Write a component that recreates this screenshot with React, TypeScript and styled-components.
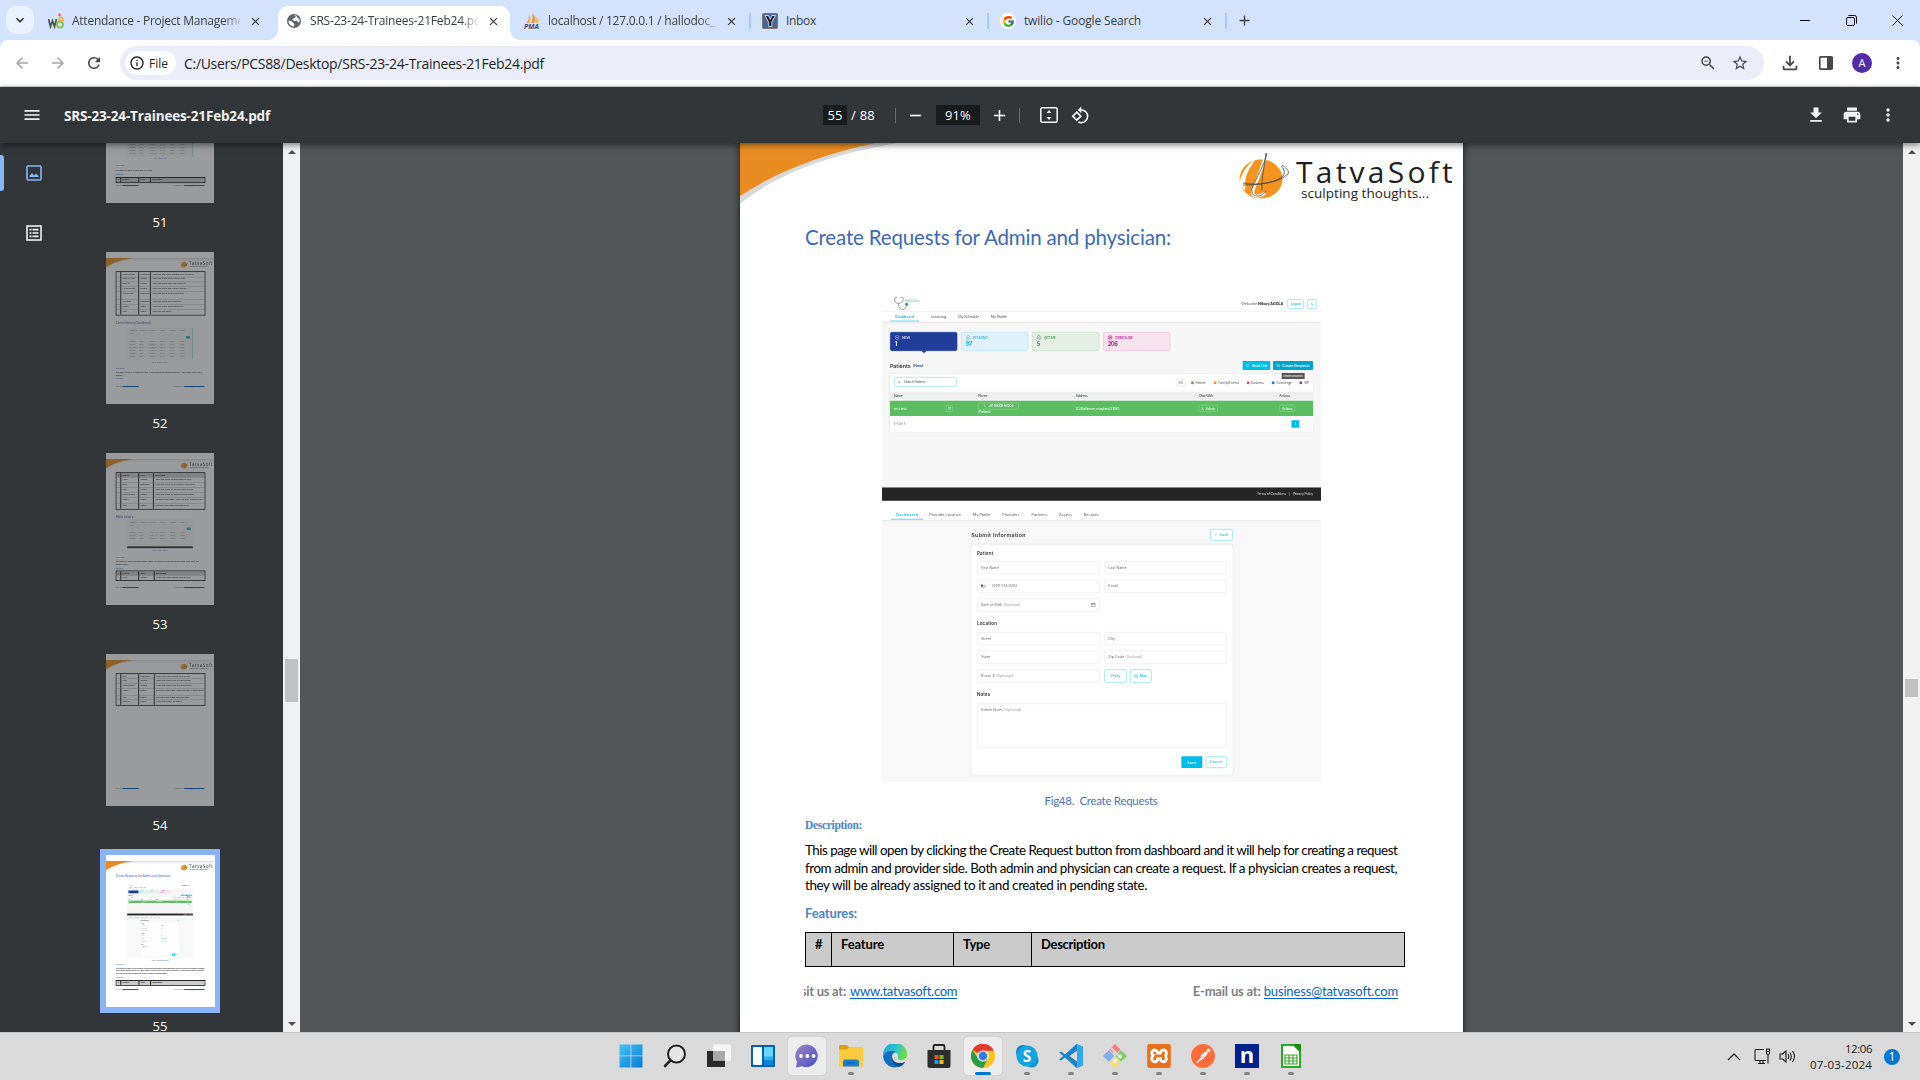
import React, { useLayoutEffect, useRef, useState } from "react";
import styled, { createGlobalStyle, css } from "styled-components";
import {
  MdAdd,
  MdArrowBack,
  MdArrowForward,
  MdClose,
  MdFileDownload,
  MdInfoOutline,
  MdKeyboardArrowDown,
  MdMenu,
  MdMoreVert,
  MdOutlineFileDownload,
  MdPrint,
  MdRefresh,
  MdRemove,
  MdRotate90DegreesCcw,
  MdStarOutline,
  MdZoomOut,
} from "react-icons/md";
import { FcGoogle } from "react-icons/fc";
import { SiPostman, SiXampp } from "react-icons/si";

const UI = `"Open Sans", "Noto Sans", sans-serif`;
const DOC = `Lato, "Open Sans", sans-serif`;
const APP = `Inter, "Open Sans", sans-serif`;

const Global = createGlobalStyle`
  * { box-sizing: border-box; }
  body { margin: 0; overflow: hidden; background: #525659; font-family: ${UI}; }
  svg { display: block; flex: none; }
`;

/* ---------- text that tracks itself to a set width ---------- */

const FitSpan = styled.span`
  display: inline-block;
  white-space: pre;
  flex: none;
  justify-self: start;
`;

function Fit({ w, children, className }: { w: number; children: string; className?: string }) {
  const ref = useRef<HTMLSpanElement>(null);
  const [tracking, setTracking] = useState(0);
  useLayoutEffect(() => {
    const el = ref.current;
    if (!el) return;
    const rect = el.getBoundingClientRect().width;
    const natural = Math.abs(rect - el.offsetWidth) < 1 ? rect : el.offsetWidth;
    setTracking((w - natural) / children.length);
  }, []);
  return (
    <FitSpan ref={ref} className={className} style={{ letterSpacing: tracking }}>
      {children}
    </FitSpan>
  );
}

/* ---------- browser frame ---------- */

const Screen = styled.div`
  width: 1920px;
  height: 1080px;
  display: flex;
  flex-direction: column;
  overflow: hidden;
`;

const TabStrip = styled.div`
  height: 40px;
  background: #d3e3fd;
  display: flex;
  flex: none;
`;

const TabSearch = styled.div`
  width: 28px;
  height: 28px;
  margin: 6px 3px 0 6px;
  border-radius: 10px;
  background: #e9f0fe;
  display: flex;
  align-items: center;
  justify-content: center;
  color: #1f1f1f;
`;

const TabBox = styled.div<{ $active?: boolean }>`
  width: 238px;
  height: 40px;
  padding: 2px 0 0 11px;
  display: flex;
  align-items: center;
  position: relative;
  ${(p) =>
    p.$active &&
    css`
      &::before {
        content: "";
        position: absolute;
        inset: 6px 3px 0 3px;
        background: #fff;
        border-radius: 10px 10px 0 0;
      }
      &::after {
        content: "";
        position: absolute;
        left: -7px;
        right: -7px;
        bottom: 0;
        height: 10px;
        background: radial-gradient(circle at 0 0, transparent 9.5px, #fff 10px) left / 10px 10px no-repeat,
          radial-gradient(circle at 100% 0, transparent 9.5px, #fff 10px) right / 10px 10px no-repeat;
      }
    `}
`;

const Favicon = styled.div`
  width: 16px;
  height: 16px;
  margin-right: 8px;
  position: relative;
  z-index: 1;
`;

const TabTitle = styled.div<{ $fade?: boolean }>`
  width: 168px;
  overflow: hidden;
  position: relative;
  z-index: 1;
  font-size: 12px;
  line-height: 18px;
  color: #3c4043;
  ${(p) => p.$fade && css`mask-image: linear-gradient(90deg, #000 90%, rgba(0, 0, 0, 0.15));`}
`;

const TabClose = styled.div`
  width: 16px;
  margin-left: 7px;
  position: relative;
  z-index: 1;
  display: flex;
  justify-content: center;
  color: #333;
`;

const NewTab = styled.div`
  width: 34px;
  display: flex;
  align-items: center;
  justify-content: center;
  color: #3c4043;
`;

const Spacer = styled.div`
  flex: 1;
`;

const WindowButton = styled.div`
  width: 46px;
  display: flex;
  align-items: center;
  justify-content: center;
`;

const AddressRow = styled.div`
  height: 47px;
  flex: none;
  background: linear-gradient(#fff, #fff) padding-box;
  border-bottom: 1px solid #dadce0;
  display: flex;
  align-items: center;
  color: #474747;
`;

const NavIcon = styled.div<{ $muted?: boolean; $w?: number }>`
  width: ${(p) => p.$w ?? 36}px;
  display: flex;
  justify-content: center;
  flex: none;
  color: ${(p) => (p.$muted ? "#a6a6a6" : "#474747")};
`;

const Omnibox = styled.div`
  width: 1644px;
  height: 34px;
  border-radius: 17px;
  background: #ebeef8;
  display: flex;
  align-items: center;
  padding-left: 5px;
  margin-left: 8px;
  color: #1f1f1f;
  font-size: 14px;
`;

const FilePill = styled.div`
  width: 51px;
  height: 24px;
  border-radius: 12px;
  background: #fff;
  display: flex;
  align-items: center;
  gap: 4px;
  padding-left: 4px;
  margin-right: 8px;
  font-size: 12px;
`;

const Avatar = styled.div`
  width: 20px;
  height: 20px;
  border-radius: 50%;
  background: #512da8;
  color: #fff;
  font-size: 11px;
  line-height: 20px;
  text-align: center;
`;

/* ---------- pdf viewer ---------- */

const PdfBar = styled.div`
  height: 56px;
  flex: none;
  background: #323639;
  color: #f1f1f1;
  display: flex;
  align-items: center;
  position: relative;
  z-index: 3;
  box-shadow: 0 2px 6px rgba(0, 0, 0, 0.5);
`;

const PdfSide = styled.div`
  width: 823px;
  display: flex;
  align-items: center;
  padding-left: 22px;
  font-size: 13.5px;
  font-weight: 700;
`;

const PdfTitle = styled.div`
  margin-left: 22px;
  padding-top: 2px;
`;

const DarkField = styled.div<{ $w: number }>`
  width: ${(p) => p.$w}px;
  height: 20px;
  background: #191b1c;
  display: flex;
  justify-content: center;
  align-items: center;
`;

const PdfCenter = styled.div`
  display: flex;
  align-items: center;
  font-size: 13px;
  color: #fff;
`;

const Rule = styled.div<{ $l: number; $r: number }>`
  width: 1px;
  height: 15px;
  background: #6b6e71;
  margin: 0 ${(p) => p.$r}px 0 ${(p) => p.$l}px;
`;

const Gap = styled.div<{ $w: number }>`
  width: ${(p) => p.$w}px;
  flex: none;
`;

const PdfEnd = styled.div`
  margin-left: auto;
  padding-right: 14px;
  display: flex;
`;

const Viewer = styled.div`
  height: 889px;
  flex: none;
  display: flex;
  background: #525659;
  overflow: hidden;
`;

const SideTabs = styled.div`
  width: 56px;
  background: #323639;
  display: flex;
  flex-direction: column;
  gap: 24px;
  padding-top: 12px;
`;

const SideTab = styled.div<{ $active?: boolean }>`
  height: 36px;
  display: flex;
  align-items: center;
  padding-left: 26px;
  color: ${(p) => (p.$active ? "#8ab4f8" : "#f1f1f1")};
  ${(p) =>
    p.$active &&
    css`
      padding-left: 0;
      &::before {
        content: "";
        width: 4px;
        height: 36px;
        margin-right: 22px;
        border-radius: 0 3px 3px 0;
        background: #8ab4f8;
      }
    `}
`;

const ThumbList = styled.div`
  width: 227px;
  height: 889px;
  background: #323639;
  overflow: hidden;
  display: flex;
  flex-direction: column;
  padding-left: 50px;
`;

const ThumbItem = styled.div<{ $first?: boolean }>`
  height: 201px;
  width: 108px;
  flex: none;
  margin-top: ${(p) => (p.$first ? -92 : 0)}px;
`;

const ThumbFrame = styled.div<{ $active?: boolean }>`
  width: 108px;
  height: 152px;
  overflow: hidden;
  background: #fff;
  ${(p) =>
    p.$active
      ? css`
          overflow: visible;
          box-shadow: 0 0 0 6px #8ab4f8;
        `
      : css`
          opacity: 0.5;
        `}
`;

const ThumbScale = styled.div`
  width: 723px;
  height: 1017px;
  overflow: hidden;
  transform: scale(0.14938);
  transform-origin: 0 0;
`;

const ThumbLabel = styled.div`
  margin-top: 9px;
  text-align: center;
  font-size: 13px;
  line-height: 20px;
  color: #fff;
`;

const ScrollTrack = styled.div`
  width: 17px;
  height: 889px;
  flex: none;
  background: #f1f1f1;
  display: flex;
  flex-direction: column;
  align-items: center;
  padding: 6px 0;
`;

const ScrollThumb = styled.div<{ $top: number; $h: number }>`
  width: 13px;
  height: ${(p) => p.$h}px;
  margin-top: ${(p) => p.$top}px;
  background: #c1c1c1;
`;

const Arrow = styled.div<{ $down?: boolean }>`
  border: 4px solid transparent;
  border-${(p) => (p.$down ? "top" : "bottom")}-color: #505050;
  border-${(p) => (p.$down ? "bottom" : "top")}-width: 0;
  margin-top: ${(p) => (p.$down ? "auto" : "1px")};
`;

const Canvas = styled.div`
  flex: 1;
  display: flex;
  justify-content: center;
  overflow: hidden;
`;

const PagePosition = styled.div`
  margin-top: -48px;
  height: 1017px;
  box-shadow: 0 0 5px 2px rgba(20, 20, 20, 0.55);
`;

/* ---------- document sheet ---------- */

const SheetBox = styled.div`
  width: 723px;
  height: 1017px;
  background: #fff;
  font-family: ${DOC};
  display: flex;
  flex-direction: column;
  color: #000;
`;

const SheetHead = styled.div`
  height: 129px;
  flex: none;
  position: relative;
  display: flex;
  justify-content: flex-end;
  padding: 57px 4px 0 0;
`;

const Swoosh = styled.svg`
  position: absolute;
  left: 0;
  top: 40px;
`;

const Brand = styled.div`
  width: 163px;
  margin-left: 5px;
  color: #231f20;
`;

const BrandName = styled.div`
  font-size: 30px;
  line-height: 34px;
  margin-top: 3px;
  font-family: "Open Sans", sans-serif;
`;

const BrandTag = styled.div`
  font-size: 13.5px;
  line-height: 16px;
  margin-left: 5px;
  margin-top: -4px;
  font-family: "Open Sans", sans-serif;
`;

const SheetBody = styled.div`
  height: 757px;
  flex: none;
  padding-left: 65px;
  display: flex;
  flex-direction: column;
  align-items: flex-start;
`;

const SheetFoot = styled.div`
  height: 20px;
  margin: 0 65px 0 64px;
  display: flex;
  font-size: 13px;
  line-height: 20px;
  color: #7f7f7f;
  font-weight: 700;
`;

const Cut = styled.span`
  width: 42px;
  margin-right: 4px;
  overflow: hidden;
  display: flex;
  justify-content: flex-end;
`;

const DocLink = styled.span<{ $thick?: boolean }>`
  color: #0563c1;
  font-weight: 400;
  height: 18px;
  border-bottom: ${(p) => (p.$thick ? 7 : 1)}px solid #0563c1;
  line-height: 20px;
`;

const Heading = styled.div<{ $mt?: number }>`
  height: 26px;
  line-height: 26px;
  margin-top: ${(p) => p.$mt ?? 0}px;
  font-size: 20.5px;
  font-weight: 400;
  color: #3d69b4;
`;

const Caption = styled.div<{ $mt: number }>`
  width: 592px;
  height: 18px;
  margin-top: ${(p) => p.$mt}px;
  text-align: center;
  font-size: 11.5px;
  line-height: 18px;
  color: #4a72b8;
`;

const SubHead = styled.div<{ $mt: number; $serif?: boolean }>`
  height: 18px;
  margin-top: ${(p) => p.$mt}px;
  line-height: 18px;
  font-weight: 700;
  color: #4a86c8;
  font-size: ${(p) => (p.$serif ? 11.5 : 13)}px;
  font-family: ${(p) => (p.$serif ? `"Liberation Serif", serif` : DOC)};
`;

const Para = styled.div<{ $mt: number }>`
  margin-top: ${(p) => p.$mt}px;
  font-size: 13.4px;
  line-height: 17.7px;
  display: flex;
  flex-direction: column;
  align-items: flex-start;
`;

const Grid = styled.div<{ $mt: number; $thick?: boolean }>`
  margin-top: ${(p) => p.$mt}px;
  width: 600px;
  border: ${(p) => (p.$thick ? 6 : 1)}px solid #000;
`;

const GridRow = styled.div<{ $cols: string; $h: number; $head?: boolean; $thick?: boolean }>`
  height: ${(p) => p.$h}px;
  display: grid;
  grid-template-columns: ${(p) => p.$cols};
  background: ${(p) => (p.$head ? "#cbcbcb" : "#fff")};
  font-weight: ${(p) => (p.$head ? 700 : 400)};
  font-size: 13px;
  & + & {
    border-top: ${(p) => (p.$thick ? 6 : 1)}px solid #000;
  }
  > div {
    padding: 2px 0 0 9px;
    line-height: 18px;
    overflow: hidden;
  }
  > div + div {
    border-left: ${(p) => (p.$thick ? 6 : 1)}px solid #000;
  }
`;

function Logo() {
  return (
    <svg width="54" height="52" viewBox="0 0 54 52">
      <ellipse cx="24" cy="27" rx="21.5" ry="19.5" fill="#f3941e" />
      <path d="M2 32C4 22 10 12 18 8C12 18 9 28 8 39Z" fill="#fff" opacity=".95" />
      <path d="M12 33C13 23 16 14 19 9C12 15 9 22 8 31Z" fill="#f3941e" />
      <path d="M29 3C25 16 20 28 16 38C14 45 21 46 28 41" fill="none" stroke="#fff" strokeWidth="3" />
      <path d="M30 1C28 13 17 29 15 37C14 45 23 47 29 39M29 1C27 17 24 29 25 38M6 31C20 34 42 31 51 22C53 19 48 15 45 13M6 33C24 33 40 30 46 24C49 20 46 16 44 14" fill="none" stroke="#444" strokeWidth=".8" />
    </svg>
  );
}

function Sheet({ thumb, children }: { thumb?: boolean; children?: React.ReactNode }) {
  return (
    <SheetBox>
      <SheetHead>
        <Swoosh width="723" height="72" viewBox="0 0 723 72">
          <defs>
            <linearGradient id="top" x1="0" y1="0" x2="0" y2="1">
              <stop offset="0" stopColor="#ddd" />
              <stop offset="1" stopColor="#fff" />
            </linearGradient>
          </defs>
          {thumb && <rect width="723" height="22" fill="url(#top)" />}
          <path d="M0 0H215C125 10 50 28 0 69Z" fill="#d9d9d9" />
          <path d="M0 0H180C108 11 48 29 0 61Z" fill="#e88c21" />
        </Swoosh>
        <Logo />
        <Brand>
          <BrandName><Fit w={160}>TatvaSoft</Fit></BrandName>
          <BrandTag><Fit w={128}>sculpting thoughts...</Fit></BrandTag>
        </Brand>
      </SheetHead>
      <SheetBody>{children}</SheetBody>
      <SheetFoot>
        <Cut><Fit w={57}>Visit us at:</Fit></Cut>
        <DocLink $thick={thumb}><Fit w={107}>www.tatvasoft.com</Fit></DocLink>
        <Spacer />
        <Fit w={68}>E-mail us at:</Fit>
        <Gap $w={3} />
        <DocLink $thick={thumb}><Fit w={134}>business@tatvasoft.com</Fit></DocLink>
      </SheetFoot>
    </SheetBox>
  );
}

/* ---------- figure inside the document (drawn at three times its printed size) ---------- */

const FigureBox = styled.div`
  width: 439px;
  height: 492px;
  margin: 40px 0 0 77px;
  overflow: hidden;
  flex: none;
`;

const FigureScale = styled.div`
  width: 1317px;
  height: 1476px;
  transform: scale(0.33333);
  transform-origin: 0 0;
  font-family: ${APP};
  font-size: 11px;
  color: #555;
`;

const AppHead = styled.div`
  height: 65px;
  padding: 20px 12px 0 36px;
  display: flex;
  align-items: flex-start;
  border-bottom: 2px solid #e4e4e4;
`;

const LogoWord = styled.div`
  margin: 5px 0 0 -14px;
  font-size: 11px;
  color: #5cc3b4;
`;

const Welcome = styled.div`
  margin: 15px 12px 0 0;
  display: flex;
  gap: 3px;
  b {
    color: #222;
  }
`;

const HeadButtons = styled.div`
  display: flex;
  gap: 10px;
  margin-top: 8px;
`;

const OutlineButton = styled.div<{ $w: number; $h: number }>`
  width: ${(p) => p.$w}px;
  height: ${(p) => p.$h}px;
  border: 2px solid #7fdcee;
  border-radius: 4px;
  background: #fff;
  color: #22b8d8;
  display: flex;
  align-items: center;
  justify-content: center;
  gap: 5px;
  font-size: 10.5px;
  font-weight: 500;
`;

const AppNav = styled.div<{ $h: number; $pad: number; $gap: number }>`
  height: ${(p) => p.$h}px;
  display: flex;
  align-items: stretch;
  padding-left: ${(p) => p.$pad}px;
  gap: ${(p) => p.$gap}px;
  background: #fff;
  box-shadow: 0 3px 5px rgba(0, 0, 0, 0.1);
  position: relative;
`;

const AppNavItem = styled.div<{ $active?: boolean; $pt: number }>`
  padding: ${(p) => p.$pt}px ${(p) => (p.$active ? 16 : 0)}px 0;
  line-height: 16px;
  ${(p) =>
    p.$active &&
    css`
      color: #17b9dd;
      font-weight: 600;
      border-bottom: 4px solid #8cdfef;
    `}
`;

const AppBody = styled.div`
  height: 496px;
  background: #f7f7f7;
  padding: 31px 24px 0;
`;

const StatRow = styled.div`
  display: flex;
  gap: 11px;
`;

const Stat = styled.div<{ $bg: string; $fg: string; $edge: string }>`
  width: 202px;
  height: 57px;
  padding: 5px 12px;
  border: 2px solid ${(p) => p.$edge};
  border-radius: 6px;
  background: ${(p) => p.$bg};
  color: ${(p) => p.$fg};
  position: relative;
  font-size: 17px;
  font-weight: 700;
  line-height: 24px;
`;

const StatHead = styled.div<{ $c: string }>`
  display: flex;
  align-items: center;
  gap: 7px;
  font-size: 11px;
  line-height: 18px;
  font-weight: 500;
  color: ${(p) => p.$c};
`;

const StatPointer = styled.div`
  position: absolute;
  left: 92px;
  top: 54px;
  border: 8px solid transparent;
  border-top-color: #1f3d99;
`;

const PatientRow = styled.div`
  height: 27px;
  margin-top: 30px;
  display: flex;
  align-items: center;
  font-size: 16px;
  font-weight: 600;
  color: #333;
`;

const NewNote = styled.span`
  font-size: 11px;
  color: #2d4a9a;
  margin-left: 7px;
`;

const SolidButton = styled.div<{ $w: number; $h: number; $dark?: boolean; $ml?: number }>`
  width: ${(p) => p.$w}px;
  height: ${(p) => p.$h}px;
  margin-left: ${(p) => p.$ml ?? 0}px;
  border-radius: 3px;
  background: ${(p) => (p.$dark ? "#00a5cc" : "#00bce8")};
  color: #fff;
  font-size: 11px;
  font-weight: 500;
  display: flex;
  align-items: center;
  justify-content: center;
  gap: 7px;
`;

const Hint = styled.div`
  position: absolute;
  right: 27px;
  top: -2px;
  width: 67px;
  height: 18px;
  background: #555;
  color: #fff;
  font-size: 8px;
  line-height: 18px;
  text-align: center;
`;

const Panel = styled.div`
  height: 175px;
  margin-top: 11px;
  background: #fff;
  border-radius: 5px;
  box-shadow: 0 0 6px rgba(0, 0, 0, 0.06);
  position: relative;
`;

const PanelTools = styled.div`
  height: 54px;
  padding: 10px 13px 0 12px;
  display: flex;
`;

const Search = styled.div`
  width: 188px;
  height: 30px;
  border: 2px solid #8edfe8;
  border-radius: 4px;
  padding-left: 10px;
  display: flex;
  align-items: center;
  gap: 8px;
  font-size: 10px;
`;

const Legend = styled.div`
  margin: 5px 0 0 auto;
  height: 24px;
  display: flex;
  align-items: center;
  font-size: 10px;
`;

const AllBox = styled.div`
  width: 28px;
  height: 22px;
  border: 1px solid #ccc;
  border-radius: 3px;
  text-align: center;
  line-height: 20px;
  margin-right: 17px;
`;

const LegendItem = styled.div<{ $c: string; $ml?: number }>`
  display: flex;
  align-items: center;
  gap: 5px;
  margin-left: ${(p) => p.$ml ?? 0}px;
  &::before {
    content: "";
    width: 9px;
    height: 9px;
    border-radius: 50%;
    background: ${(p) => p.$c};
  }
`;

const TableRow = styled.div<{ $head?: boolean }>`
  height: ${(p) => (p.$head ? 24 : 46)}px;
  margin-bottom: ${(p) => (p.$head ? 3 : 0)}px;
  padding-left: 12px;
  display: grid;
  grid-template-columns: 156px 96px 293px 369px 242px 1fr;
  align-items: center;
  font-size: 10px;
  color: ${(p) => (p.$head ? "#333" : "#fff")};
  background: ${(p) => (p.$head ? "#efefef" : "#5bbd60")};
`;

const PhoneCell = styled.div`
  display: flex;
  flex-direction: column;
  align-items: flex-start;
  line-height: 14px;
  gap: 1px;
`;

const Chip = styled.div<{ $w: number; $h: number }>`
  width: ${(p) => p.$w}px;
  height: ${(p) => p.$h}px;
  border: 1px solid #b7e2b9;
  border-radius: 3px;
  display: flex;
  align-items: center;
  justify-content: center;
  gap: 5px;
`;

const Pager = styled.div`
  height: 48px;
  padding: 0 15px 0 12px;
  display: flex;
  align-items: center;
  gap: 2px;
  font-size: 10px;
`;

const PagerCell = styled.div<{ $active?: boolean }>`
  width: 24px;
  height: 24px;
  line-height: 23px;
  text-align: center;
  border: 1px solid #eee;
  background: ${(p) => (p.$active ? "#00bce8" : "#fff")};
  color: ${(p) => (p.$active ? "#fff" : "#999")};
`;

const AppFoot = styled.div`
  height: 42px;
  background: #262626;
  border-top: 3px solid #8a8a8a;
  border-bottom: 3px solid #555;
  color: #ddd;
  display: flex;
  align-items: center;
  justify-content: flex-end;
  gap: 9px;
  padding-right: 24px;
  font-size: 10px;
`;

const FormWrap = styled.div`
  height: 786px;
  background: #f8f8f8;
  padding: 27px 265px 0 268px;
`;

const FormTop = styled.div`
  height: 35px;
  display: flex;
  align-items: center;
  justify-content: space-between;
  font-size: 16px;
  font-weight: 600;
  color: #333;
`;

const FormCard = styled.div`
  height: 690px;
  margin-top: 12px;
  padding: 0 17px;
  background: #fff;
  border-radius: 7px;
  box-shadow: 0 0 7px rgba(0, 0, 0, 0.08);
`;

const FormTitle = styled.div<{ $h: number; $first?: boolean }>`
  height: ${(p) => p.$h}px;
  padding-top: ${(p) => (p.$first ? 15 : 26)}px;
  font-size: 13.5px;
  line-height: 20px;
  font-weight: 600;
  color: #333;
`;

const FieldGrid = styled.div`
  display: grid;
  grid-template-columns: 1fr 1fr;
  column-gap: 14px;
  row-gap: 16px;
`;

const Field = styled.div<{ $h?: number }>`
  height: ${(p) => p.$h ?? 40}px;
  border: 2px solid #ececec;
  border-radius: 4px;
  padding: 10px 10px 0;
  display: flex;
  line-height: 16px;
  font-size: 10.5px;
  color: #666;
  i {
    font-style: normal;
    color: #999;
    margin-left: 3px;
  }
`;

const Flag = styled.div`
  width: 15px;
  height: 10px;
  margin: 3px 18px 0 0;
  background: linear-gradient(90deg, #3c4a86 45%, transparent 45%) top / 100% 55% no-repeat,
    repeating-linear-gradient(#d8475a 0 2px, #f1c7cc 2px 3px);
`;

const Actions = styled.div<{ $end?: boolean }>`
  display: flex;
  gap: 10px;
  justify-content: ${(p) => (p.$end ? "flex-end" : "flex-start")};
  margin-top: ${(p) => (p.$end ? 25 : 0)}px;
`;

const AfterActive = styled.div`
  margin-left: -18px;
`;

function Glyph({ d, c = "currentColor", s = 11 }: { d: string; c?: string; s?: number }) {
  return (
    <svg width={s} height={s} viewBox="0 0 12 12" fill="none" stroke={c} strokeWidth="1.1">
      <path d={d} />
    </svg>
  );
}

const adminNav: [string, number][] = [
  ["Provider Location", 95],
  ["My Profile", 52],
  ["Providers", 51],
  ["Partners", 47],
  ["Access", 38],
  ["Records", 45],
];

function Figure() {
  return (
    <FigureBox>
      <FigureScale>
        <AppHead>
          <svg width="46" height="44" viewBox="0 0 46 44" fill="none" stroke="#666" strokeWidth="2">
            <path d="M9 2C1 0 0 8 3 14C6 22 20 22 25 14C31 6 28 0 19 2M13 20C14 42 32 44 37 28" />
            <circle cx="38" cy="23" r="4" fill="#2e9e8e" stroke="#2e9e8e" />
          </svg>
          <LogoWord><Fit w={46}>HalloDoc</Fit></LogoWord>
          <Spacer />
          <Welcome><Fit w={47}>Welcome</Fit><b><Fit w={76}>Nikunj AGOLA</Fit></b></Welcome>
          <HeadButtons>
            <OutlineButton $w={50} $h={29}><Fit w={30}>Logout</Fit></OutlineButton>
            <OutlineButton $w={29} $h={29}><Glyph d="M5 1A5 5 0 1 0 11 8A5 5 0 0 1 5 1Z" /></OutlineButton>
          </HeadButtons>
        </AppHead>
        <AppNav $h={30} $pad={24} $gap={36}>
          <AppNavItem $active $pt={6}><Fit w={56}>Dashboard</Fit></AppNavItem>
          <AppNavItem $pt={7}><Fit w={45}>Invoicing</Fit></AppNavItem>
          <AppNavItem $pt={7}><Fit w={62}>My Schedule</Fit></AppNavItem>
          <AppNavItem $pt={7}><Fit w={47}>My Profile</Fit></AppNavItem>
        </AppNav>
        <AppBody>
          <StatRow>
            <Stat $bg="#1f3d99" $fg="#fff" $edge="#1f3d99">
              <StatHead $c="#dfe6ff">
                <Glyph s={15} d="M6 1A5 5 0 1 0 6 11A5 5 0 1 0 6 1M3 6H9" /><Fit w={24}>NEW</Fit>
              </StatHead>
              1<StatPointer />
            </Stat>
            <Stat $bg="#e0f1f9" $fg="#19b4dc" $edge="#b9e4f3">
              <StatHead $c="#35bce0">
                <Glyph s={15} d="M6 1A2.5 2.5 0 1 0 6 6A2.5 2.5 0 1 0 6 1M1 11C1 6 11 6 11 11Z" /><Fit w={45}>PENDING</Fit>
              </StatHead>
              <Fit w={20}>97</Fit>
            </Stat>
            <Stat $bg="#e5efe5" $fg="#2c9a3a" $edge="#c3dfc4">
              <StatHead $c="#3f9a49">
                <Glyph s={15} d="M8 1.500A5 5 0 1 0 11 6M3.500 5.500L6 8L11 2" /><Fit w={35}>ACTIVE</Fit>
              </StatHead>
              5
            </Stat>
            <Stat $bg="#f7e2ee" $fg="#b6248f" $edge="#efbcdc">
              <StatHead $c="#b6248f">
                <Glyph s={15} d="M6 1A5 5 0 1 0 6 11A5 5 0 1 0 6 1M3 4H9V8H3ZM3 6H9" /><Fit w={54}>CONCLUDE</Fit>
              </StatHead>
              <Fit w={29}>206</Fit>
            </Stat>
          </StatRow>
          <PatientRow>
            <Fit w={62}>Patients</Fit>
            <NewNote><Fit w={31}>(New)</Fit></NewNote>
            <Spacer />
            <SolidButton $w={83} $h={27}>
              <Glyph d="M1 5L11 1L7 11L5 7Z" /><Fit w={47}>Send Link</Fit>
            </SolidButton>
            <SolidButton $w={120} $h={27} $dark $ml={8}>
              <Glyph d="M2 1H8L10 4V11H2ZM4 7H8M6 5V9" /><Fit w={82}>Create Requests</Fit>
            </SolidButton>
          </PatientRow>
          <Panel>
            <Hint><Fit w={58}>Create Requests</Fit></Hint>
            <PanelTools>
              <Search>
                <Glyph d="M8 8L11 11M9 5A4 4 0 1 1 1 5A4 4 0 1 1 9 5Z" s={9} />
                <Fit w={66}>Search Patients</Fit>
              </Search>
              <Legend>
                <AllBox>All</AllBox>
                <LegendItem $c="#4bb450"><Fit w={30}>Patient</Fit></LegendItem>
                <LegendItem $c="#f29a1f" $ml={25}><Fit w={60}>Family/Friend</Fit></LegendItem>
                <LegendItem $c="#e8506a" $ml={24}><Fit w={37}>Business</Fit></LegendItem>
                <LegendItem $c="#2479c4" $ml={24}><Fit w={46}>Concierge</Fit></LegendItem>
                <LegendItem $c="#8b3fb5" $ml={23}><Fit w={14}>VIP</Fit></LegendItem>
              </Legend>
            </PanelTools>
            <TableRow $head>
              <Fit w={26}>Name</Fit>
              <span />
              <Fit w={28}>Phone</Fit>
              <Fit w={36}>Address</Fit>
              <Fit w={42}>Chat With</Fit>
              <Fit w={33}>Actions</Fit>
            </TableRow>
            <TableRow>
              <Fit w={38}>test test</Fit>
              <Chip $w={20} $h={19}><Glyph d="M1 3H11V9H1ZL6 7L11 3" s={10} c="#fff" /></Chip>
              <PhoneCell>
                <Chip $w={122} $h={20}>
                  <Glyph s={9} d="M2 1C1 6 6 11 11 10L10 7L8 8L4 4L5 2Z" /><Fit w={76}>+91 98009 68203</Fit>
                </Chip>
                <Fit w={38}>(Patient)</Fit>
              </PhoneCell>
              <Fit w={130}>123 Baltimore, maryland 21080</Fit>
              <Chip $w={57} $h={20}>
                <Glyph s={9} d="M6 1A2.5 2.5 0 1 0 6 6A2.5 2.5 0 1 0 6 1M1 11C1 6 11 6 11 11Z" /><Fit w={28}>Admin</Fit>
              </Chip>
              <Chip $w={47} $h={20}><Fit w={32}>Actions</Fit></Chip>
            </TableRow>
            <Pager>
              <Fit w={33}>1-1 of 1</Fit>
              <Spacer />
              <PagerCell>‹</PagerCell>
              <PagerCell $active>1</PagerCell>
              <PagerCell>›</PagerCell>
            </Pager>
          </Panel>
        </AppBody>
        <AppFoot>
          <Fit w={86}>Terms of Conditions</Fit>|<Fit w={60}>Privacy Policy</Fit>
        </AppFoot>
        <AppNav $h={57} $pad={27} $gap={36}>
          <AppNavItem $active $pt={33}><Fit w={65}>Dashboard</Fit></AppNavItem>
          {adminNav.map(([t, w], i) => (
            <AppNavItem key={t} $pt={33}>
              {i === 0 ? <AfterActive><Fit w={w}>{t}</Fit></AfterActive> : <Fit w={w}>{t}</Fit>}
            </AppNavItem>
          ))}
        </AppNav>
        <FormWrap>
          <FormTop>
            <Fit w={164}>Submit Information</Fit>
            <OutlineButton $w={68} $h={35}><Glyph d="M8 1L3 6L8 11" /><Fit w={27}>Back</Fit></OutlineButton>
          </FormTop>
          <FormCard>
            <FormTitle $h={49} $first><Fit w={50}>Patient</Fit></FormTitle>
            <FieldGrid>
              <Field><Fit w={55}>First Name</Fit></Field>
              <Field><Fit w={55}>Last Name</Fit></Field>
              <Field><Flag /><Fit w={76}>(201) 555-0123</Fit></Field>
              <Field><Fit w={30}>Email</Fit></Field>
              <Field>
                <Fit w={64}>Date of Birth</Fit><i><Fit w={51}>(Optional)</Fit></i>
                <Spacer />
                <Glyph d="M1 3H11V11H1ZM1 5H11M3 1V3M9 1V3" c="#444" s={14} />
              </Field>
            </FieldGrid>
            <FormTitle $h={61}><Fit w={60}>Location</Fit></FormTitle>
            <FieldGrid>
              <Field><Fit w={31}>Street</Fit></Field>
              <Field><Fit w={20}>City</Fit></Field>
              <Field><Fit w={28}>State</Fit></Field>
              <Field><Fit w={48}>Zip Code</Fit><i><Fit w={51}>(Optional)</Fit></i></Field>
              <Field><Fit w={42}>Room #</Fit><i><Fit w={51}>(Optional)</Fit></i></Field>
              <Actions>
                <OutlineButton $w={67} $h={40}><Fit w={31}>Verify</Fit></OutlineButton>
                <OutlineButton $w={65} $h={40}>
                  <Glyph d="M6 1A5 5 0 1 0 6 11A5 5 0 1 0 6 1M6 4A2 2 0 1 0 6 8A2 2 0 1 0 6 4" s={12} />
                  <Fit w={24}>Map</Fit>
                </OutlineButton>
              </Actions>
            </FieldGrid>
            <FormTitle $h={62}><Fit w={40}>Notes</Fit></FormTitle>
            <Field $h={134}><Fit w={66}>Admin Notes</Fit><i><Fit w={52}>(Optional)</Fit></i></Field>
            <Actions $end>
              <SolidButton $w={63} $h={35}><Fit w={28}>Save</Fit></SolidButton>
              <OutlineButton $w={64} $h={35}><Fit w={38}>Cancel</Fit></OutlineButton>
            </Actions>
          </FormCard>
        </FormWrap>
      </FigureScale>
    </FigureBox>
  );
}

function CreateRequestsPage({ thumb }: { thumb?: boolean }) {
  return (
    <Sheet thumb={thumb}>
      <Heading><Fit w={366}>Create Requests for Admin and physician:</Fit></Heading>
      <Figure />
      <Caption $mt={10}><Fit w={113}>Fig48.  Create Requests</Fit></Caption>
      <SubHead $mt={6} $serif><Fit w={57}>Description:</Fit></SubHead>
      <Para $mt={8}>
        <Fit w={592}>This page will open by clicking the Create Request button from dashboard and it will help for creating a request</Fit>
        <Fit w={592}>from admin and provider side. Both admin and physician can create a request. If a physician creates a request,</Fit>
        <Fit w={342}>they will be already assigned to it and created in pending state.</Fit>
      </Para>
      <SubHead $mt={9}><Fit w={52}>Features:</Fit></SubHead>
      <Grid $mt={10} $thick={thumb}>
        <GridRow $head $h={thumb ? 26 : 33} $thick={thumb} $cols="25px 122px 78px 1fr">
          <div>#</div>
          <div><Fit w={43}>Feature</Fit></div>
          <div><Fit w={27}>Type</Fit></div>
          <div><Fit w={64}>Description</Fit></div>
        </GridRow>
      </Grid>
    </Sheet>
  );
}

/* ---------- other thumbnail pages ---------- */

const Shot = styled.div<{ $mt: number; $h: number; $bar?: boolean }>`
  width: 439px;
  height: ${(p) => p.$h}px;
  margin: ${(p) => p.$mt}px 0 0 77px;
  padding: 6px 14px;
  background: #f8f8f8;
  border-bottom: ${(p) => (p.$bar ? "12px solid #262626" : "0")};
  border-right: ${(p) => (p.$bar ? "0" : "5px solid #9ed2d6")};
  font-size: 11px;
  line-height: 17px;
  color: #888;
  display: flex;
  flex-direction: column;
  flex-shrink: 0;
`;

const ShotLine = styled.div`
  display: grid;
  grid-template-columns: repeat(6, 1fr);
  margin-top: 3px;
  white-space: nowrap;
  flex: none;
`;

const ShotButton = styled.div`
  width: 26px;
  height: 16px;
  margin: 8px 0 6px auto;
  background: #1bb1c4;
  flex: none;
`;

const TinyText = styled.div<{ $mt: number }>`
  width: 592px;
  margin-top: ${(p) => p.$mt}px;
  font-size: 13px;
  line-height: 17px;
`;

function MiniTable({ cols, rows, head, mt = 0 }: { cols: string; rows: [number, string, string, string][]; head?: boolean; mt?: number }) {
  return (
    <Grid $mt={mt} $thick>
      {rows.map(([h, a, b, c], i) => (
        <GridRow key={i} $h={h} $thick $cols={cols} $head={head && i === 0}>
          <div>{head && i === 0 ? "#" : ""}</div>
          <div>{a}</div>
          <div>{b}</div>
          <div>{c}</div>
        </GridRow>
      ))}
    </Grid>
  );
}

function MiniShot({ mt, h, bar, lines, plain }: { mt: number; h: number; bar?: boolean; lines: number; plain?: boolean }) {
  return (
    <Shot $mt={mt} $h={h} $bar={bar}>
      {!plain && (
        <>
          <ShotLine><span>Dashboard</span><span>Providers</span><span>Partners</span><span>Access</span><span>Records</span><span>Logout</span></ShotLine>
          <ShotLine><span>History</span></ShotLine>
          <ShotButton />
        </>
      )}
      {Array.from({ length: lines }, (_, i) => (
        <ShotLine key={i}><span>test test</span><span>Email</span><span>Phone 12</span><span>Oct 12</span><span>Lorem</span><span>Lorem</span></ShotLine>
      ))}
    </Shot>
  );
}

const Page51 = () => (
  <Sheet thumb>
    <MiniShot mt={480} h={100} lines={4} plain />
    <Caption $mt={4}>Fig44. Email Log</Caption>
    <SubHead $mt={29} $serif>Description:</SubHead>
    <TinyText $mt={11}>This page will show all email and SMS logs.</TinyText>
    <SubHead $mt={8}>Features:</SubHead>
    <MiniTable mt={12} head cols="25px 120px 78px 1fr" rows={[[28, "Feature", "Type", "Description"]]} />
  </Sheet>
);

const Page52 = () => (
  <Sheet thumb>
    <MiniTable
      cols="25px 120px 78px 1fr"
      rows={[
        [32, "Search by Role", "Dropdown", "Admin can filter log by selecting a role by default"],
        [33, "Receiver name", "Textbox", "Admin can search log by receiver name"],
        [33, "Email Id", "Textbox", "Admin can search email logs by email id"],
        [33, "Mobile number", "Textbox", "Admin can search logs by phone number"],
        [54, "Created date", "Datepicker", "Admin can search log by created date"],
        [33, "Sent date", "Datepicker", "Admin can search log by sent date"],
        [33, "Search", "Button", "Admin can search added entries here"],
        [33, "Clear", "Button", "Admin can clear search"],
      ]}
    />
    <Heading $mt={38}>Cancel History(Continued)</Heading>
    <MiniShot mt={20} h={210} lines={6} />
    <Caption $mt={8}>Fig45. Cancel History</Caption>
    <SubHead $mt={26} $serif>Description:</SubHead>
    <TinyText $mt={8}>This page will show all cancelled cases. Admin can search cancelled cases by Name, Date, Email, Phone number.</TinyText>
    <SubHead $mt={8}>Features:</SubHead>
  </Sheet>
);

const Page53 = () => (
  <Sheet thumb>
    <MiniTable
      head
      cols="25px 120px 98px 1fr"
      rows={[
        [28, "Feature", "Type", "Description"],
        [33, "Name", "Textbox", "Admin can search cancelled cases by name"],
        [33, "Date", "Datepicker", "Admin can search cases by date of cancellation"],
        [33, "Email", "Textbox", "Admin can search the cases by email address"],
        [33, "Phone number", "Textbox", "Admin can search the cases by phone number"],
        [45, "Search", "Button", "Clicking on this button, Admin can apply all search filters"],
        [33, "Clear", "Button", "Clicking on this button clears the search"],
      ]}
    />
    <Heading $mt={32}>Block history:</Heading>
    <MiniShot mt={8} h={192} bar lines={3} />
    <Caption $mt={9}>Fig46. Block History</Caption>
    <SubHead $mt={29} $serif>Description:</SubHead>
    <TinyText $mt={8}>This page will show all blocked cases. Admin can Search any blocked case by name, date, email and phone number.</TinyText>
    <SubHead $mt={8}>Features:</SubHead>
    <MiniTable mt={8} head cols="25px 120px 104px 1fr" rows={[[26, "Feature", "Type", "Description"], [32, "Name", "Textbox", "Admin can search blocked cases by name"]]} />
  </Sheet>
);

const Page54 = () => (
  <Sheet thumb>
    <MiniTable
      cols="25px 120px 104px 1fr"
      rows={[
        [28, "Date", "Datepicker", "Admin can search blocked cases by date"],
        [33, "Email", "Textbox", "Admin can search cases by email address"],
        [33, "Phone number", "Textbox", "Admin can search cases by phone number"],
        [47, "Search", "Button", "Clicking on this button, Admin can apply all search filters"],
        [31, "Clear", "Button", "Clicking on this button clears the filters"],
        [33, "Unblock", "Button", "Admin can unblock the patient"],
      ]}
    />
  </Sheet>
);

/* ---------- taskbar ---------- */

const Taskbar = styled.div`
  height: 48px;
  flex: none;
  background: #dadada;
  border-top: 1px solid #c4c4c4;
  display: flex;
  align-items: center;
  padding-left: 609px;
  color: #1a1a1a;
`;

const TaskItem = styled.div`
  width: 44px;
  height: 47px;
  display: flex;
  justify-content: center;
  padding-top: 4px;
`;

const TaskTile = styled.div<{ $on?: boolean }>`
  width: 38px;
  height: 38px;
  border-radius: 4px;
  display: flex;
  flex-direction: column;
  align-items: center;
  padding-top: 7px;
  background: ${(p) => (p.$on ? "#ededed" : "transparent")};
  box-shadow: ${(p) => (p.$on ? "0 0 1px rgba(0,0,0,.25)" : "none")};
`;

const TaskMark = styled.div<{ $wide?: boolean }>`
  width: ${(p) => (p.$wide ? 16 : 6)}px;
  height: 3px;
  margin-top: 4px;
  border-radius: 2px;
  background: ${(p) => (p.$wide ? "#0078d4" : "#828282")};
`;

const Clock = styled.div`
  width: 70px;
  margin-left: 2px;
  display: flex;
  flex-direction: column;
  align-items: flex-end;
  font-size: 11.5px;
  line-height: 16px;
`;

const TrayBadge = styled.div`
  width: 16px;
  height: 16px;
  margin: 0 20px 0 12px;
  border-radius: 50%;
  background: #0078d4;
  color: #fff;
  font-size: 12px;
  line-height: 16px;
  text-align: center;
`;

const Tray = styled.div`
  margin-left: auto;
  display: flex;
  align-items: center;
`;

const XamppTile = styled.div`
  width: 24px;
  height: 24px;
  border-radius: 3px;
  background: #fff;
  color: #e8701a;
`;

const PostmanTile = styled(XamppTile)`
  border-radius: 50%;
  color: #ff6c37;
`;

const NTile = styled.div`
  width: 24px;
  height: 24px;
  background: #00208e;
  color: #fff;
  font: 700 22px/20px "Open Sans", sans-serif;
  text-align: center;
`;

const I = ({ children }: { children: React.ReactNode }) => (
  <svg width="24" height="24" viewBox="0 0 24 24">{children}</svg>
);

const taskIcons: { icon: React.ReactNode; mark?: boolean; on?: boolean; wide?: boolean }[] = [
  {
    icon: (
      <I>
        <defs>
          <linearGradient id="win" x1="0" y1="0" x2="1" y2="1">
            <stop offset="0" stopColor="#3fc3fb" />
            <stop offset="1" stopColor="#0a7bd4" />
          </linearGradient>
        </defs>
        <path d="M.5.5H11.500V11.500H.5ZM12.300.5H23.500V11.500H12.300ZM.5 12.300H11.500V23.500H.5ZM12.300 12.300H23.500V23.500H12.300Z" fill="url(#win)" />
      </I>
    ),
  },
  {
    icon: (
      <I>
        <circle cx="13.5" cy="10" r="8.5" fill="#e6e6e6" stroke="#222" strokeWidth="2" />
        <path d="M7.300 16.500L2 22" stroke="#222" strokeWidth="2.6" strokeLinecap="round" />
      </I>
    ),
  },
  {
    icon: (
      <I>
        <rect x="0" y="7" width="18" height="16" fill="#2a2a2a" />
        <rect x="6" y="0.5" width="18" height="16" fill="#f5f5f5" />
        <rect x="6" y="7" width="12" height="9.5" fill="#a9a9a9" />
      </I>
    ),
  },
  {
    icon: (
      <I>
        <rect y="1" width="24" height="22" rx="1" fill="#0560ad" />
        <rect x="2" y="3" width="9" height="18" rx="1" fill="#fbfbfb" />
        <rect x="13" y="3" width="9" height="10" fill="#6ad6ff" />
        <rect x="13" y="12.5" width="9" height="4" fill="#2daef2" />
        <rect x="13" y="16.5" width="9" height="4.5" fill="#0a84e0" />
      </I>
    ),
  },
  {
    on: true,
    icon: (
      <I>
        <defs>
          <linearGradient id="chat" x1="0" y1="0" x2="1" y2="1">
            <stop offset="0" stopColor="#9a86c8" />
            <stop offset="1" stopColor="#4b4fc4" />
          </linearGradient>
        </defs>
        <path d="M12 .5A11.300 11.300 0 1 1 7 22.200L1 23.500L2 17.500A11.300 11.300 0 0 1 12 .5Z" fill="url(#chat)" />
        <circle cx="6" cy="12" r="1.9" fill="#fff" />
        <circle cx="12.3" cy="12" r="1.9" fill="#fff" />
        <circle cx="18.6" cy="12" r="1.9" fill="#fff" />
      </I>
    ),
  },
  {
    mark: true,
    icon: (
      <I>
        <path d="M0 2.500Q0 1 1.500 1H8L10.500 3.500H22.500Q24 3.500 24 5V8H0Z" fill="#dd9f10" />
        <path d="M0 5.500H8L10 3.500H24V22.500H0Z" fill="#fecb3e" />
        <path d="M4 22.500V17.500Q4 15.500 6 15.500H18Q20 15.500 20 17.500V22.500Z" fill="#1b7fcd" />
        <path d="M8 18.800H16" stroke="#0e5ea6" strokeWidth="1.2" />
      </I>
    ),
  },
  {
    icon: (
      <I>
        <defs>
          <linearGradient id="edgeA" x1="0" y1="0" x2="1" y2=".3">
            <stop offset="0" stopColor="#1b9de2" />
            <stop offset=".6" stopColor="#2cc5c8" />
            <stop offset="1" stopColor="#6bd84c" />
          </linearGradient>
        </defs>
        <path d="M0 11A12 12 0 0 1 24 10.500C24 15 20 17 15.500 15.500C14 15 15.500 13.500 15 11.500C14 7 5 5.500 0 11Z" fill="url(#edgeA)" />
        <path d="M0 12C2 6.500 9.500 6 13 8C8.500 9 8 14 10.500 17C13.500 20.500 18 20.500 22 18A12 12 0 0 1 0 12Z" fill="#0d6fc4" />
        <path d="M9 13C8 18 12 22.500 17 22.800A12 12 0 0 0 22.500 17.500C18 20.500 10 19.500 9 13Z" fill="#104a8e" />
      </I>
    ),
  },
  {
    icon: (
      <I>
        <path d="M6.500 7V2.500Q6.500 1 8 1H16Q17.500 1 17.500 2.500V7" fill="none" stroke="#222" strokeWidth="1.8" />
        <path d="M.5 6H23.500V22Q23.500 24 21.500 24H2.500Q.5 24 .5 22Z" fill="#2d2d2d" />
        <path d="M7.500 11H11.500V15H7.500Z" fill="#f25022" />
        <path d="M12.500 11H16.500V15H12.500Z" fill="#7fba00" />
        <path d="M7.500 16H11.500V20H7.500Z" fill="#00a4ef" />
        <path d="M12.500 16H16.500V20H12.500Z" fill="#ffb900" />
      </I>
    ),
  },
  {
    mark: true,
    wide: true,
    on: true,
    icon: (
      <I>
        <circle cx="12" cy="12" r="12" fill="#fcc31e" />
        <path d="M1.600 6A12 12 0 0 1 22.600 6.500H12Z" fill="#e33b2e" />
        <path d="M12 12L1.600 6A12 12 0 0 1 22.600 6.500H12Z" fill="#e33b2e" />
        <path d="M7.200 14.800L1.600 6A12 12 0 0 0 12 24L16.700 14.800Z" fill="#2a9d4a" />
        <circle cx="12" cy="12" r="5.600" fill="#fff" />
        <circle cx="12" cy="12" r="4.400" fill="#2f7de9" />
      </I>
    ),
  },
  {
    mark: true,
    icon: (
      <I>
        <circle cx="8" cy="8" r="7" fill="#0a7fc0" />
        <circle cx="16.500" cy="16.500" r="7" fill="#0a8fd0" />
        <circle cx="12" cy="12" r="10.500" fill="#12a5e2" />
        <text x="12" y="17.500" textAnchor="middle" fontFamily="Open Sans, sans-serif" fontWeight="700" fontSize="15.500" fill="#fff">S</text>
      </I>
    ),
  },
  {
    mark: true,
    icon: (
      <I>
        <path d="M17.500 0L24 2.800V21.200L17.500 24L6 13.500L2.200 16.500L0 15.500L4.200 12L0 8.500L2.200 7.500L6 10.500ZM18 6.500L10.500 12L18 17.500Z" fill="#1a84c7" fillRule="evenodd" />
        <path d="M18 0L24 2.800V21.200L18 24Z" fill="#33a7ec" />
      </I>
    ),
  },
  {
    mark: true,
    icon: (
      <I>
        <path d="M12 0L17.500 5.500L12 11L6.500 5.500Z" fill="#f77f7c" />
        <path d="M5.800 6.200L11.300 12L5.800 17.800L0 12Z" fill="#84abf3" />
        <path d="M18.200 6.200L24 12L18.200 17.800L12.500 12Z" fill="#82cc6e" />
        <path d="M12 12.700L17.500 18.300L12 24L6.500 18.300Z" fill="#fddc77" />
        <path d="M8 4L12 8V17M12 9L17 12.500" stroke="#dadada" strokeWidth="1.800" fill="none" />
        <circle cx="12" cy="9" r="2" fill="#dadada" />
        <circle cx="17" cy="12.500" r="2" fill="#f2f2f2" />
        <circle cx="12" cy="17" r="2" fill="#f2f2f2" />
      </I>
    ),
  },
  { icon: <XamppTile><SiXampp size={24} /></XamppTile>, mark: true },
  { icon: <PostmanTile><SiPostman size={24} /></PostmanTile>, mark: true },
  { icon: <NTile>n</NTile>, mark: true },
  {
    mark: true,
    icon: (
      <I>
        <path d="M3 1H15L21 7V23H3Z" fill="#fff" stroke="#2bab1f" strokeWidth="2" />
        <path d="M14 0H22V8Z" fill="#1d8a15" />
        <path d="M6 11H18V20H6ZM6 14H18M6 17H18M10 11V20M14 11V20" fill="none" stroke="#3aa52f" strokeWidth="1.200" />
      </I>
    ),
  },
];

/* ---------- tabs ---------- */

const Disc = styled.div`
  width: 16px;
  height: 16px;
  border-radius: 50%;
  background: #fff;
  display: flex;
  align-items: center;
  justify-content: center;
`;

const TabLine = styled.div`
  width: 2px;
  height: 16px;
  margin-left: auto;
  background: #a8c7fa;
`;

const tabs: { title: string; w: number; icon: React.ReactNode; fade?: boolean; active?: boolean; line?: boolean }[] = [
  {
    title: "Attendance - Project Management",
    w: 183,
    fade: true,
    icon: (
      <svg width="16" height="16" viewBox="0 0 16 16" fill="none">
        <path d="M.5 6L2.500 13.500L4.500 8L6.500 13.500L8.500 6" stroke="#555" strokeWidth="1.800" />
        <circle cx="12" cy="11.500" r="3" stroke="#8bc34a" strokeWidth="2" />
        <circle cx="13" cy="6" r="1.900" stroke="#f5a623" strokeWidth="1.400" />
        <circle cx="11.500" cy="1.800" r="1.500" fill="#ef6c57" />
      </svg>
    ),
  },
  {
    title: "SRS-23-24-Trainees-21Feb24.pdf",
    w: 175,
    fade: true,
    active: true,
    icon: (
      <svg width="16" height="16" viewBox="0 0 16 16">
        <circle cx="8" cy="8" r="7" fill="#5f6368" />
        <path d="M2.500 7.500L6 8.500L8.500 11.500L7.500 13.800A6 6 0 0 1 2.500 7.500ZM8 2.200L10 3.500L8 5.500L6 6L8 8H11L13 10A6 6 0 0 0 13.500 6L11 4.500L10.500 2.500A6 6 0 0 0 8 2.200Z" fill="#fff" />
      </svg>
    ),
  },
  {
    title: "localhost / 127.0.0.1 / hallodoc_",
    w: 167,
    fade: true,
    line: true,
    icon: (
      <svg width="16" height="16" viewBox="0 0 16 16">
        <path d="M2 10C5 7 5 4 4.500 2C7 4 7 8 5.500 10Z" fill="#f5a94b" />
        <path d="M7 10C9 6 9 3 8 .5C12 3 12 8 10 10Z" fill="#f0912a" />
        <path d="M11.500 10C12.500 7 12.500 5 12 3.500C14.500 5.500 15 8 14.500 10Z" fill="#f7b96b" />
        <text x="0" y="15.500" fontSize="7" fontWeight="700" fontStyle="italic" fontFamily="Open Sans, sans-serif" fill="#4a4a75" textLength="15" lengthAdjust="spacingAndGlyphs">PMA</text>
      </svg>
    ),
  },
  {
    title: "Inbox",
    w: 30,
    line: true,
    icon: (
      <svg width="16" height="16" viewBox="0 0 16 16">
        <rect x=".5" y=".5" width="15" height="15" rx="1" fill="#4d6491" stroke="#777" />
        <text x="8" y="13" textAnchor="middle" fontSize="14" fontWeight="700" fontFamily="Open Sans, sans-serif" fill="#0a0a1c" stroke="#dfe6f5" strokeWidth="1.600" paintOrder="stroke">Y</text>
      </svg>
    ),
  },
  {
    title: "twilio - Google Search",
    w: 117,
    line: true,
    icon: <Disc><FcGoogle size={13} /></Disc>,
  },
];

function Scrollbar({ top, h }: { top: number; h: number }) {
  return (
    <ScrollTrack>
      <Arrow />
      <ScrollThumb $top={top} $h={h} />
      <Arrow $down />
    </ScrollTrack>
  );
}

const thumbs: [string, React.ReactNode][] = [
  ["51", <Page51 />],
  ["52", <Page52 />],
  ["53", <Page53 />],
  ["54", <Page54 />],
  ["55", <CreateRequestsPage thumb />],
];

const AddressFrame = styled.div`
  background: #d3e3fd;
  flex: none;
  ${AddressRow} {
    border-radius: 8px 8px 0 0;
  }
`;

const NavWhite = styled.div`
  width: 36px;
  display: flex;
  justify-content: center;
`;

export default function App() {
  return (
    <Screen>
      <Global />
      <TabStrip>
        <TabSearch><MdKeyboardArrowDown size={16} /></TabSearch>
        {tabs.map((t) => (
          <TabBox key={t.title} $active={t.active}>
            <Favicon>{t.icon}</Favicon>
            <TabTitle $fade={t.fade}><Fit w={t.w}>{t.title}</Fit></TabTitle>
            <TabClose><MdClose size={13} /></TabClose>
            {t.line && <TabLine />}
          </TabBox>
        ))}
        <NewTab><MdAdd size={17} /></NewTab>
        <Spacer />
        <WindowButton>
          <svg width="10" height="10"><path d="M0 5.500H10" stroke="#000" /></svg>
        </WindowButton>
        <WindowButton>
          <svg width="11" height="11" fill="none" stroke="#000">
            <rect x=".5" y="2.500" width="8" height="8" rx="1.500" />
            <path d="M2.500 .5H8.500Q10.500 .5 10.500 2.500V8.500" />
          </svg>
        </WindowButton>
        <WindowButton>
          <svg width="11" height="11" stroke="#000"><path d="M.5 .5L10.500 10.500M10.500 .5L.5 10.500" /></svg>
        </WindowButton>
      </TabStrip>
      <AddressFrame>
        <AddressRow>
          <Gap $w={4} />
          <NavIcon $muted><MdArrowBack size={18} /></NavIcon>
          <NavIcon $muted><MdArrowForward size={18} /></NavIcon>
          <NavIcon><MdRefresh size={18} /></NavIcon>
          <Omnibox>
            <FilePill><MdInfoOutline size={16} /><Fit w={19}>File</Fit></FilePill>
            <Fit w={360}>C:/Users/PCS88/Desktop/SRS-23-24-Trainees-21Feb24.pdf</Fit>
            <Spacer />
            <NavIcon $w={32}><MdZoomOut size={18} /></NavIcon>
            <NavIcon $w={32}><MdStarOutline size={18} /></NavIcon>
            <Gap $w={8} />
          </Omnibox>
          <Gap $w={8} />
          <NavIcon><MdOutlineFileDownload size={22} /></NavIcon>
          <NavIcon>
            <svg width="16" height="16" viewBox="0 0 16 16">
              <rect x="1.800" y="1.800" width="12.400" height="12.400" rx="1" fill="none" stroke="#474747" strokeWidth="1.700" />
              <rect x="9" y="2" width="5.500" height="12" fill="#474747" />
            </svg>
          </NavIcon>
          <NavIcon><Avatar>A</Avatar></NavIcon>
          <NavIcon><MdMoreVert size={18} /></NavIcon>
        </AddressRow>
      </AddressFrame>
      <PdfBar>
        <PdfSide>
          <MdMenu size={20} />
          <PdfTitle><Fit w={206}>SRS-23-24-Trainees-21Feb24.pdf</Fit></PdfTitle>
        </PdfSide>
        <PdfCenter>
          <DarkField $w={24}><Fit w={15}>55</Fit></DarkField>
          <Gap $w={4} />
          <Fit w={24}>/ 88</Fit>
          <Rule $l={20} $r={10} />
          <MdRemove size={19} />
          <Gap $w={11} />
          <DarkField $w={44}><Fit w={26}>91%</Fit></DarkField>
          <Gap $w={10} />
          <MdAdd size={19} />
          <Rule $l={10} $r={20} />
          <svg width="18" height="16" viewBox="0 0 18 16">
            <rect x=".8" y=".8" width="16.400" height="14.400" rx="1.500" fill="none" stroke="#f1f1f1" strokeWidth="1.600" />
            <path d="M9 3L11.500 6H6.500ZM9 13L11.500 10H6.500Z" fill="#f1f1f1" />
          </svg>
          <Gap $w={13} />
          <MdRotate90DegreesCcw size={19} />
        </PdfCenter>
        <PdfEnd>
          <NavWhite><MdFileDownload size={20} /></NavWhite>
          <NavWhite><MdPrint size={20} /></NavWhite>
          <NavWhite><MdMoreVert size={20} /></NavWhite>
        </PdfEnd>
      </PdfBar>
      <Viewer>
        <SideTabs>
          <SideTab $active>
            <svg width="16" height="16" viewBox="0 0 16 16">
              <rect x="1" y="1" width="14" height="14" rx="1" fill="none" stroke="currentColor" strokeWidth="1.600" />
              <path d="M3.500 12V11L6 8L8 10.500L10 8.500L12.500 11V12Z" fill="currentColor" />
            </svg>
          </SideTab>
          <SideTab>
            <svg width="16" height="16" viewBox="0 0 16 16">
              <rect x="1" y="1" width="14" height="14" fill="none" stroke="currentColor" strokeWidth="1.600" />
              <path d="M3.500 4.700H5.500M6.500 4.700H12.500M3.500 8H5.500M6.500 8H12.500M3.500 11.300H5.500M6.500 11.300H12.500" stroke="currentColor" strokeWidth="1.700" />
            </svg>
          </SideTab>
        </SideTabs>
        <ThumbList>
          {thumbs.map(([n, page], i) => (
            <ThumbItem key={n} $first={i === 0}>
              <ThumbFrame $active={n === "55"}><ThumbScale>{page}</ThumbScale></ThumbFrame>
              <ThumbLabel>{n}</ThumbLabel>
            </ThumbItem>
          ))}
        </ThumbList>
        <Scrollbar top={505} h={43} />
        <Canvas>
          <PagePosition><CreateRequestsPage /></PagePosition>
        </Canvas>
        <Scrollbar top={525} h={18} />
      </Viewer>
      <Taskbar>
        {taskIcons.map((t, i) => (
          <TaskItem key={i}>
            <TaskTile $on={t.on}>
              {t.icon}
              {t.mark && <TaskMark $wide={t.wide} />}
            </TaskTile>
          </TaskItem>
        ))}
        <Tray>
          <svg width="14" height="8" fill="none" stroke="#1a1a1a" strokeWidth="1.300"><path d="M1 7L7 1L13 7" /></svg>
          <Gap $w={13} />
          <svg width="17" height="17" viewBox="0 0 17 17" fill="none" stroke="#1a1a1a" strokeWidth="1.100">
            <path d="M10 1.500H2Q1 1.500 1 2.500V11.500Q1 12.500 2 12.500H12M4 15.500H11M6 12.500V15.500M9 12.500V15.500M12.500 1H15.500V5Q15.500 6.500 14 6.500Q12.500 6.500 12.500 5ZM14 6.500V15.500M12 3.500H16" />
          </svg>
          <Gap $w={8} />
          <svg width="17" height="15" viewBox="0 0 17 15" fill="none" stroke="#1a1a1a" strokeWidth="1.100">
            <path d="M1 5H3.500L7 2V13L3.500 10H1ZM9 5Q10.500 7.500 9 10M11 3.500Q13.500 7.500 11 11.500M13.500 2Q17.500 7.500 13.500 13" />
          </svg>
          <Gap $w={4} />
          <Clock>
            <Fit w={27}>12:06</Fit>
            <Fit w={62}>07-03-2024</Fit>
          </Clock>
          <TrayBadge>1</TrayBadge>
        </Tray>
      </Taskbar>
    </Screen>
  );
}
